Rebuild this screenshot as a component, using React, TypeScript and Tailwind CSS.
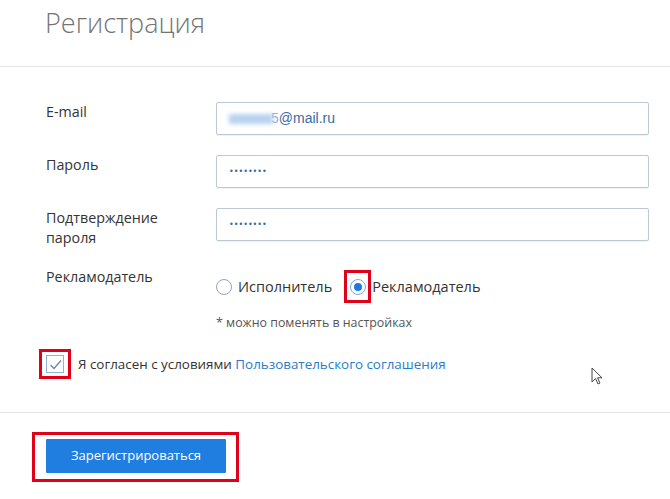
import React from 'react';

const rows = [
  { label: ['E-mail'], kind: 'email' },
  { label: ['Пароль'], kind: 'password' },
  { label: ['Подтверждение', 'пароля'], kind: 'password' },
];

function Radio({ checked }: { checked?: boolean }) {
  return (
    <span
      className={`w-4 h-4 rounded-full border flex items-center justify-center bg-white ${
        checked ? 'border-[#7fa9d6]' : 'border-[#8ea4bb]'
      }`}
    >
      {checked && <span className="w-[8px] h-[8px] rounded-full bg-[#1f7ae0]" />}
    </span>
  );
}

export default function App() {
  return (
    <div className="relative w-[670px] h-[499px] bg-white overflow-hidden font-['Open_Sans',sans-serif] text-[#333]">
      <div className="h-[67px] pl-[45px] pt-[5px] border-b border-[#e6e6e6]">
        <h1 className="text-[27px] leading-[36px] font-light text-[#747474]">Регистрация</h1>
      </div>

      <div className="pl-[46px] pt-[35px]">
        <div className="flex flex-col gap-[20px]">
          {rows.map((r, i) => (
            <div key={i} className="grid grid-cols-[170px_433px] h-[33px]">
              <div className="text-[14.3px] leading-[20px]">
                {r.label.map(l => (
                  <div key={l}>{l}</div>
                ))}
              </div>
              <div className="h-[33px] border border-[#bcc8d3] rounded-[2px] shadow-[0_1px_1px_rgba(0,0,0,0.06)] flex items-center pl-[12px]">
                {r.kind === 'email' ? (
                  <span className="flex items-center font-['Liberation_Sans',sans-serif] text-[14px] text-[#3a6ba3]">
                    <span className="inline-block w-[44px] h-[10px] bg-[#b7d2ef] blur-[2px]" />
                    <span className="text-[#8fb3da] -ml-[2px]">5</span>
                    <span>@mail.ru</span>
                  </span>
                ) : (
                  <span className="text-[8px] leading-none text-[#3a6ba3] font-['DejaVu_Sans',sans-serif]">
                    ••••••••
                  </span>
                )}
              </div>
            </div>
          ))}
        </div>

        <div className="grid grid-cols-[170px_433px] mt-[20px]">
          <div className="text-[14.3px] leading-[20px] pt-[6px]">Рекламодатель</div>
          <div className="pt-[9px]">
            <div className="flex items-center h-[33px] text-[14.5px]">
              <Radio />
              <span className="ml-[6px]">Исполнитель</span>
              <span className="ml-[12px] h-[33px] w-[27px] border-[3px] border-[#e0001a] flex items-center justify-center">
                <Radio checked />
              </span>
              <span className="ml-[1px]">Рекламодатель</span>
            </div>
            <div className="mt-[12px] text-[12.4px] leading-[16px] text-[#555]">* можно поменять в настройках</div>
          </div>
        </div>

        <div className="flex items-center mt-[18px] -ml-[7px]">
          <span className="border-[3px] border-[#e0001a] px-[4px] py-[3px]">
            <span className="w-[18px] h-[18px] border border-[#8fb4d8] bg-white flex items-center justify-center">
              <svg width="13" height="11" viewBox="0 0 13 11" fill="none">
                <path d="M1.5 6 L5 9.5 L12 1.5" stroke="#5b87b3" strokeWidth="1.2" />
              </svg>
            </span>
          </span>
          <span className="ml-[7px] text-[13.4px]">
            Я согласен с условиями <span className="text-[#2a7cc7]">Пользовательского соглашения</span>
          </span>
        </div>
      </div>

      <div className="mt-[33px] border-t border-[#e6e6e6] pt-[19px] pl-[32px]">
        <div className="inline-block border-[3px] border-[#e0001a] pl-[11px] pr-[10px] pt-[4px] pb-[6px]">
          <button className="w-[180px] h-[34px] bg-[#1f7ee0] text-white text-[13px] rounded-[1px]">
            Зарегистрироваться
          </button>
        </div>
      </div>

      <svg className="absolute left-[591px] top-[367px]" width="12" height="19" viewBox="0 0 12 19">
        <path d="M1 1 L1 15 L4.5 11.5 L7 17 L9 16 L6.5 10.8 L11 10.8 Z" fill="white" stroke="#444" strokeWidth="1" />
      </svg>
    </div>
  );
}
